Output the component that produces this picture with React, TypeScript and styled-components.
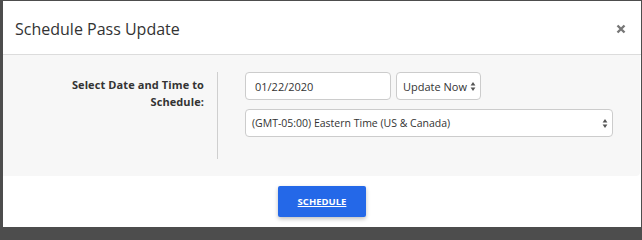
import React from "react"
import styled, { createGlobalStyle } from "styled-components"

const GlobalStyle = createGlobalStyle`
  html, body {
    margin: 0;
    padding: 0;
    background: #4d4d4d;
    overflow: hidden;
  }
  body {
    font-family: "Open Sans", "Liberation Sans", sans-serif;
    color: #333;
  }
`

const Modal = styled.div`
  margin: 1px 1px 0 3px;
  width: 638px;
  background: #fff;
  height: 226px;
  display: flex;
  flex-direction: column;
`

const Header = styled.div`
  box-sizing: border-box;
  height: 54px;
  border-bottom: 1px solid #dcdcdc;
  display: flex;
  align-items: center;
  justify-content: space-between;
  padding: 2px 14px 0 12px;
`

const Title = styled.h4`
  margin: 0;
  font-size: 16px;
  font-weight: 400;
  color: #333;
`

const CloseButton = styled.button`
  border: none;
  background: none;
  padding: 0;
  width: 12px;
  height: 12px;
  display: flex;
  align-items: center;
  justify-content: center;
  cursor: pointer;
`

const Body = styled.div`
  background: #f7f7f7;
  margin-right: 1px;
  border-radius: 0 0 4px 0;
  padding: 17px 0;
`

const FormRow = styled.div`
  display: grid;
  grid-template-columns: 214px 1fr;
`

const Label = styled.label`
  text-align: right;
  padding: 4px 13px 0 0;
  font-size: 11px;
  font-weight: 700;
  line-height: 17px;
  letter-spacing: 0.1px;
  color: #333;
`

const Controls = styled.div`
  border-left: 1px solid #cfcfcf;
  padding: 0 27px 22px 27px;
  display: flex;
  flex-direction: column;
  gap: 9px;
`

const InlineRow = styled.div`
  display: flex;
  gap: 5px;
`

const DateInput = styled.input`
  box-sizing: border-box;
  width: 146px;
  height: 28px;
  border: 1px solid #ccc;
  border-radius: 4px;
  background: #fff;
  padding: 0 9px;
  font-family: "Open Sans", "Liberation Sans", sans-serif;
  font-size: 11px;
  color: #333;
  outline: none;
`

const SelectBox = styled.div<{ $wide?: boolean }>`
  box-sizing: border-box;
  height: 28px;
  width: ${p => (p.$wide ? "100%" : "85px")};
  border: 1px solid #ccc;
  border-radius: 4px;
  background: #fff;
  display: flex;
  align-items: center;
  justify-content: space-between;
  padding: 0 4px 0 6px;
  font-size: ${p => (p.$wide ? "10.5px" : "11px")};
  color: #333;
  white-space: nowrap;
`

const Footer = styled.div`
  flex: 1;
  display: flex;
  justify-content: center;
  align-items: flex-start;
  padding-top: 10px;
`

const PrimaryButton = styled.button`
  width: 88px;
  height: 31px;
  border: none;
  border-radius: 2px;
  background: #2468e8;
  color: #fff;
  font-family: "Open Sans", "Liberation Sans", sans-serif;
  font-size: 9.5px;
  font-weight: 700;
  text-decoration: underline;
  box-shadow: 0 2px 4px rgba(0, 0, 0, 0.25);
  cursor: pointer;
`

const Arrows = () => (
  <svg width="6" height="11" viewBox="0 0 6 11">
    <path d="M3 1 L5.4 4.4 H0.6 Z" fill="#555" />
    <path d="M3 10 L5.4 6.6 H0.6 Z" fill="#555" />
  </svg>
)

export default function App() {
  return (
    <>
      <GlobalStyle />
      <Modal>
        <Header>
          <Title>Schedule Pass Update</Title>
          <CloseButton aria-label="Close">
            <svg width="10" height="10" viewBox="0 0 10 10">
              <path d="M1.5 1.5 L8.5 8.5 M8.5 1.5 L1.5 8.5" stroke="#777" strokeWidth="2.4" />
            </svg>
          </CloseButton>
        </Header>
        <Body>
          <FormRow>
            <Label>
              Select Date and Time to
              <br />
              Schedule:
            </Label>
            <Controls>
              <InlineRow>
                <DateInput value="01/22/2020" readOnly />
                <SelectBox>
                  <span>Update Now</span>
                  <Arrows />
                </SelectBox>
              </InlineRow>
              <SelectBox $wide>
                <span>(GMT-05:00) Eastern Time (US &amp; Canada)</span>
                <Arrows />
              </SelectBox>
            </Controls>
          </FormRow>
        </Body>
        <Footer>
          <PrimaryButton>SCHEDULE</PrimaryButton>
        </Footer>
      </Modal>
    </>
  )
}
